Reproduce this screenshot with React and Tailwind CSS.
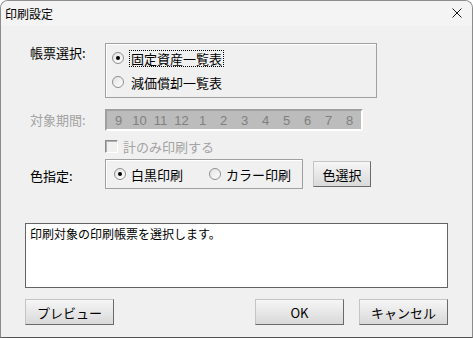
const months = ['9', '10', '11', '12', '1', '2', '3', '4', '5', '6', '7', '8'];

const Radio = ({ checked }) => (
  <span className="flex h-[12px] w-[12px] shrink-0 items-center justify-center rounded-full border border-[#8f8f8f] bg-gradient-to-br from-[#e2e2e2] to-white">
    {checked && <span className="h-[4px] w-[4px] rounded-full bg-black" />}
  </span>
);

const Button = ({ children, className = '' }) => (
  <button
    className={`flex h-[26px] items-center justify-center border border-t-[#c4c4c4] border-l-[#c4c4c4] border-r-[#6a6a6a] border-b-[#6a6a6a] bg-gradient-to-b from-[#f6f6f6] to-[#d9d9d9] text-[13px] leading-none text-black ${className}`}
  >
    {children}
  </button>
);

export default function App() {
  return (
    <div
      className="flex h-[338px] w-[473px] flex-col overflow-hidden rounded-t-[8px] border border-[#8c8c8c] border-b-[#555555] bg-[#f0f0f0] text-black"
      style={{ fontFamily: '"Noto Sans CJK JP", "Liberation Sans", sans-serif' }}
    >
      <div className="flex h-[25px] shrink-0 items-center justify-between bg-[#f4f4f4] pl-[4px] pr-[10px] text-[12px] leading-none">
        <span>印刷設定</span>
        <svg width="10" height="10" viewBox="0 0 10 10" className="-mt-[1px]">
          <path d="M0.5 0.5 L9.5 9.5 M9.5 0.5 L0.5 9.5" stroke="#1a1a1a" strokeWidth="1" />
        </svg>
      </div>

      <div className="flex flex-1 flex-col px-[24px] text-[13px]">
        {/* 帳票選択 */}
        <div className="mt-[17px] flex pl-[5px]">
          <div className="w-[75px] pt-[2px] leading-[16px]">帳票選択:</div>
          <div className="flex h-[55px] w-[272px] flex-col gap-[4px] border border-[#a0a0a0] pl-[6px] pt-[4px] shadow-[inset_1px_1px_0_#ffffff]">
            <div className="flex h-[20px] items-center gap-[5px]">
              <Radio checked />
              <span className="border border-dotted border-black px-[1px] leading-[15px]">固定資産一覧表</span>
            </div>
            <div className="flex h-[20px] items-center gap-[5px]">
              <Radio />
              <span className="border border-transparent px-[1px] leading-[15px]">減価償却一覧表</span>
            </div>
          </div>
        </div>

        {/* 対象期間 */}
        <div className="mt-[11px] flex pl-[5px]">
          <div className="w-[75px] leading-[22px] text-[#a3a3a3]">対象期間:</div>
          <div className="flex h-[22px] w-[258px] items-center border-2 border-t-[#a0a0a0] border-l-[#a0a0a0] border-r-white border-b-white bg-[#bcbcbc] pl-[1px]">
            {months.map((m) => (
              <span
                key={m}
                className="w-[21px] text-center text-[13px] leading-none text-[#808080]"
                style={{ fontFamily: '"Liberation Sans", sans-serif' }}
              >
                {m}
              </span>
            ))}
          </div>
        </div>

        {/* 計のみ印刷する */}
        <div className="mt-[5px] flex h-[20px] items-center pl-[80px]">
          <span className="h-[13px] w-[13px] border border-t-[#8a8a8a] border-l-[#8a8a8a] border-r-white border-b-white bg-[#f0f0f0] shadow-[inset_1px_1px_0_#b0b0b0]" />
          <span className="ml-[5px] leading-none text-[#a3a3a3]">計のみ印刷する</span>
        </div>

        {/* 色指定 */}
        <div className="mt-[3px] flex items-center pl-[5px]">
          <div className="w-[75px] pt-[3px] leading-[16px]">色指定:</div>
          <div className="flex h-[30px] w-[198px] items-center border border-[#a0a0a0] pl-[8px] shadow-[inset_1px_1px_0_#ffffff]">
            <Radio checked />
            <span className="ml-[5px] leading-none">白黒印刷</span>
            <span className="ml-[26px]">
              <Radio />
            </span>
            <span className="ml-[5px] leading-none">カラー印刷</span>
          </div>
          <Button className="ml-[10px] w-[58px]">色選択</Button>
        </div>

        {/* message */}
        <div className="mt-[34px] h-[65px] w-full border border-[#646464] bg-white px-[4px] pt-[3px] text-[12px] leading-[14px]">
          印刷対象の印刷帳票を選択します。
        </div>

        {/* buttons */}
        <div className="mt-[11px] flex justify-between">
          <Button className="w-[89px] text-[12px]">プレビュー</Button>
          <div className="flex gap-[15px]">
            <Button className="w-[89px] text-[12px]">OK</Button>
            <Button className="w-[89px] text-[12px]">キャンセル</Button>
          </div>
        </div>
      </div>
    </div>
  );
}
